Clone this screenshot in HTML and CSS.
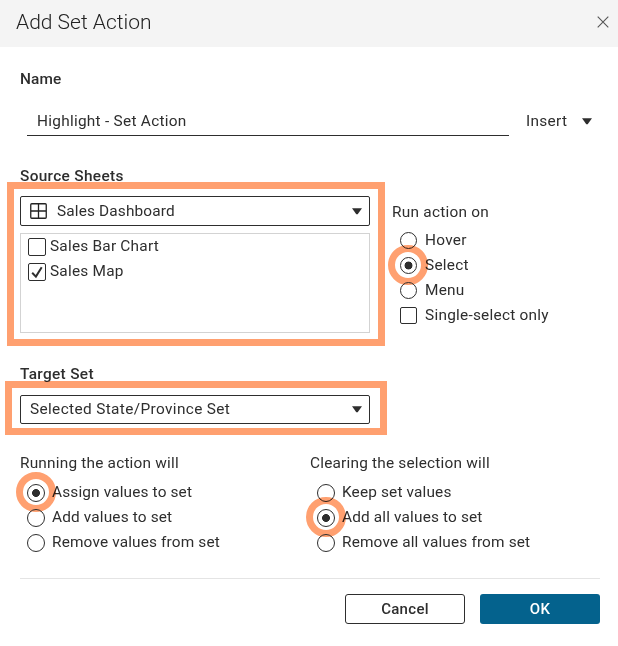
FILE: index.html
```html
<!DOCTYPE html>
<html lang="en">
<head>
<meta charset="utf-8">
<title>Add Set Action</title>
<link rel="stylesheet" href="styles.css">
</head>
<body>
<div class="dialog">
  <header class="titlebar">
    <h1>Add Set Action</h1>
    <svg class="close" width="12" height="12" viewBox="0 0 12 12"><path d="M.7.7l10.6 10.6M11.3.7L.7 11.3"/></svg>
  </header>
  <main>
    <h2 class="name-label">Name</h2>
    <div class="name-row">
      <div class="name-input">Highlight - Set Action</div>
      <div class="insert">Insert <svg class="caret" width="10" height="7" viewBox="0 0 10 7"><path d="M0 .3h10L5.7 6.3H4.3z"/></svg></div>
    </div>
    <div class="columns">
      <section class="source">
        <h2>Source Sheets</h2>
        <div class="select sheet-select">
          <svg class="grid-icon" width="17" height="16" viewBox="0 0 17 16"><rect x=".75" y=".75" width="15.5" height="14.5" rx="1"/><path d="M8.5 1v14M1 8h15"/></svg>
          <span class="sheet-name">Sales Dashboard</span>
          <svg class="caret" width="10" height="7" viewBox="0 0 10 7"><path d="M0 .3h10L5.7 6.3H4.3z"/></svg>
        </div>
        <div class="list">
          <div class="row"><span class="check"></span><span>Sales Bar Chart</span></div>
          <div class="row"><span class="check"><svg width="16" height="16" viewBox="0 0 16 16"><path d="M3.2 8.8l3.7 3.8 5.8-9.3"/></svg></span><span>Sales Map</span></div>
        </div>
        <div class="mark mark-source"></div>
      </section>
      <section class="run">
        <h3>Run action on</h3>
        <div class="row"><span class="radio"></span><span>Hover</span></div>
        <div class="row"><span class="radio on"><i class="ring"></i></span><span>Select</span></div>
        <div class="row"><span class="radio"></span><span>Menu</span></div>
        <div class="row"><span class="check"></span><span>Single-select only</span></div>
      </section>
    </div>
    <section class="target">
      <h2>Target Set</h2>
      <div class="select">
        <span>Selected State/Province Set</span>
        <svg class="caret" width="10" height="7" viewBox="0 0 10 7"><path d="M0 .3h10L5.7 6.3H4.3z"/></svg>
      </div>
      <div class="mark mark-target"></div>
    </section>
    <div class="behaviors">
      <section>
        <h3>Running the action will</h3>
        <div class="row"><span class="radio on"><i class="ring"></i></span><span>Assign values to set</span></div>
        <div class="row"><span class="radio"></span><span>Add values to set</span></div>
        <div class="row"><span class="radio"></span><span>Remove values from set</span></div>
      </section>
      <section>
        <h3>Clearing the selection will</h3>
        <div class="row"><span class="radio"></span><span>Keep set values</span></div>
        <div class="row"><span class="radio on"><i class="ring"></i></span><span>Add all values to set</span></div>
        <div class="row"><span class="radio"></span><span>Remove all values from set</span></div>
      </section>
    </div>
    <footer>
      <button class="cancel">Cancel</button>
      <button class="ok">OK</button>
    </footer>
  </main>
</div>
</body>
</html>
```
FILE: styles.css
```css
* { box-sizing: border-box; }
body {
  margin: 0;
  background: #fff;
  color: #2e2e2e;
  font: 15.4px/25px Roboto, "Liberation Sans", sans-serif;
  letter-spacing: .15px;
}
.dialog { height: 646px; overflow: hidden; }
h1, h2, h3 { margin: 0; font-size: 15.4px; line-height: 25px; white-space: nowrap; }
h2 { font-weight: 500; letter-spacing: .33px; }
h3 { font-weight: 400; letter-spacing: .2px; }
svg { display: block; flex: none; }
.titlebar {
  display: flex;
  align-items: center;
  justify-content: space-between;
  height: 47px;
  padding: 0 9px 4px 16px;
  background: #f4f4f4;
}
.titlebar h1 { padding-top: 1px; font-size: 21px; font-weight: 300; letter-spacing: 0; color: #222; }
.close { fill: none; stroke: #555; stroke-width: 1.1; }
.caret { fill: #2e2e2e; }
main { padding: 20px 18px 0 20px; }
.name-label { letter-spacing: .15px; }
.name-row { display: flex; padding: 14px 0 0 7px; }
.name-input { width: 482px; height: 30px; padding: 3px 10px 0; border-bottom: 1px solid #2e2e2e; letter-spacing: .27px; }
.insert { display: flex; align-items: center; gap: 15px; height: 31px; margin: 0 0 -1px 17px; letter-spacing: .3px; }
.columns { display: flex; gap: 22px; height: 225px; padding-top: 28px; }
.source, .target { position: relative; width: 350px; }
.select {
  display: flex;
  align-items: center;
  justify-content: space-between;
  height: 30px;
  padding: 0 7px 0 9px;
  border: 1px solid #2e2e2e;
  border-radius: 2px;
}
.source .select { margin-top: 7px; }
.target h2 { padding-top: 1px; }
.target .select { height: 29px; margin-top: 8px; letter-spacing: .36px; }
.grid-icon { fill: none; stroke: #222; stroke-width: 1.3; }
.sheet-name { margin: 0 auto 0 10px; }
.list { height: 100px; margin-top: 7px; border: 1px solid #d3d3d3; padding: 0 7px; letter-spacing: .22px; }
.row { display: flex; align-items: center; height: 25px; white-space: nowrap; }
.check, .radio { flex: none; width: 18px; height: 18px; border: 1px solid #2e2e2e; }
.check { border-radius: 2px; }
.check svg { fill: none; stroke: #2e2e2e; stroke-width: 2; }
.radio { position: relative; border-radius: 50%; }
.radio.on { background: radial-gradient(circle, #2e2e2e 3.6px, transparent 4.3px); }
.ring {
  position: absolute;
  left: -12px;
  top: -13px;
  width: 40px;
  height: 40px;
  border: 7.5px solid #ffa070;
  border-radius: 50%;
  mix-blend-mode: multiply;
}
.list .row { gap: 4px; }
.mark { position: absolute; border: 7px solid #ffa070; pointer-events: none; mix-blend-mode: multiply; }
.mark-source { left: -13px; top: 18px; width: 378px; height: 164px; }
.mark-target { left: -15px; top: 20px; width: 382px; height: 54px; }
.run { padding-top: 34px; letter-spacing: .25px; }
.run h3 { height: 30px; line-height: 28px; letter-spacing: .25px; }
.run .row { padding-left: 8px; gap: 8px; }
.run .check, .run .radio { width: 17px; height: 17px; }
.run .ring { left: -13px; }
.behaviors { display: grid; grid-template-columns: 290px auto; padding-top: 27px; }
.behaviors .row { padding-left: 7px; gap: 7px; }
.behaviors h3 { height: 29px; }
footer {
  display: flex;
  justify-content: flex-end;
  gap: 15px;
  margin-top: 23px;
  padding-top: 15px;
  border-top: 1px solid #e4e4e4;
}
button { width: 120px; height: 30px; padding: 0; border-radius: 3px; font: 500 15px Roboto, sans-serif; letter-spacing: .3px; }
.cancel { border: 1px solid #2e2e2e; background: #fff; color: #2e2e2e; }
.ok { border: 0; background: #04628d; color: #fff; }
```
